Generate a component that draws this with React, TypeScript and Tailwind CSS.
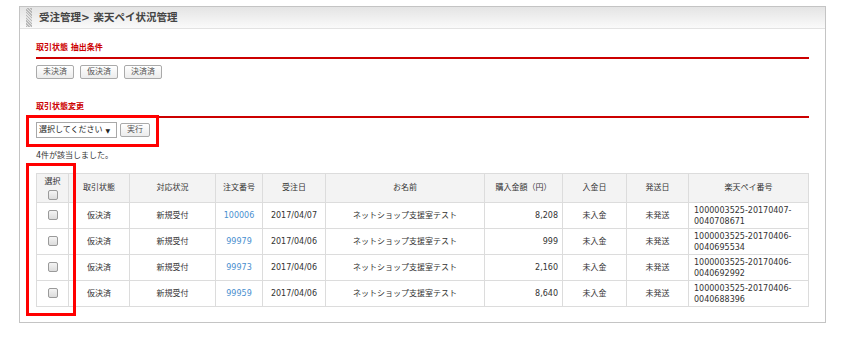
import React from 'react';

type Order = {
  status: string;
  response: string;
  orderNo: string;
  date: string;
  name: string;
  amount: string;
  paid: string;
  shipped: string;
  payNo: [string, string];
};

const ORDERS: Order[] = [
  { status: '仮決済', response: '新規受付', orderNo: '100006', date: '2017/04/07', name: 'ネットショップ支援室テスト', amount: '8,208', paid: '未入金', shipped: '未発送', payNo: ['1000003525-20170407-', '0040708671'] },
  { status: '仮決済', response: '新規受付', orderNo: '99979', date: '2017/04/06', name: 'ネットショップ支援室テスト', amount: '999', paid: '未入金', shipped: '未発送', payNo: ['1000003525-20170406-', '0040695534'] },
  { status: '仮決済', response: '新規受付', orderNo: '99973', date: '2017/04/06', name: 'ネットショップ支援室テスト', amount: '2,160', paid: '未入金', shipped: '未発送', payNo: ['1000003525-20170406-', '0040692992'] },
  { status: '仮決済', response: '新規受付', orderNo: '99959', date: '2017/04/06', name: 'ネットショップ支援室テスト', amount: '8,640', paid: '未入金', shipped: '未発送', payNo: ['1000003525-20170406-', '0040688396'] },
];

const COLUMNS: { label: string; width: number }[] = [
  { label: '選択', width: 32 },
  { label: '取引状態', width: 61 },
  { label: '対応状況', width: 86 },
  { label: '注文番号', width: 47 },
  { label: '受注日', width: 63 },
  { label: 'お名前', width: 159 },
  { label: '購入金額（円）', width: 78 },
  { label: '入金日', width: 64 },
  { label: '発送日', width: 62 },
  { label: '楽天ペイ番号', width: 120 },
];

function Checkbox() {
  return (
    <span className="inline-block w-[10px] h-[10px] rounded-[2px] border border-[#9a9a9a] bg-gradient-to-b from-[#f4f4f4] to-[#dcdcdc] align-middle" />
  );
}

function SmallButton({ label }: { label: string }) {
  return (
    <button className="h-[14px] px-[6px] rounded-[2px] border border-[#aaaaaa] bg-gradient-to-b from-white to-[#ececec] text-[8px] leading-[12px] text-[#555]">
      {label}
    </button>
  );
}

function SectionHeading({ title }: { title: string }) {
  return (
    <div>
      <p className="text-[8px] leading-[12px] font-bold text-[#cc0000]">{title}</p>
      <div className="mt-[3px] h-[2px] bg-[#cc0000]" />
    </div>
  );
}

export default function App() {
  const cell = 'border border-[#dcdcdc] px-[4px] text-[8px] leading-[12px]';

  return (
    <div
      className="relative w-[845px] h-[337px] bg-white overflow-hidden text-[#333]"
      style={{ fontFamily: '"DejaVu Sans", "Noto Sans CJK JP", sans-serif' }}
    >
      <div className="ml-[19px] mt-[6px] w-[807px] h-[317px] border border-[#c4c4c4] bg-white">
        {/* header bar */}
        <div className="h-[22px] flex items-center border-b border-[#e2e2e2] bg-gradient-to-b from-[#e4e4e4] to-[#fafafa]">
          <div className="ml-[6px] w-[6px] h-[19px] bg-[repeating-linear-gradient(45deg,#b8b8b8_0px,#b8b8b8_1px,#e2e2e2_1px,#e2e2e2_2px)]" />
          <h1 className="ml-[7px] text-[10.5px] font-bold text-[#444]">受注管理&gt; 楽天ペイ状況管理</h1>
        </div>

        <div className="px-[16px]">
          <div className="mt-[13px]">
            <SectionHeading title="取引状態 抽出条件" />
          </div>
          <div className="mt-[6px] flex gap-[6px]">
            <SmallButton label="未決済" />
            <SmallButton label="仮決済" />
            <SmallButton label="決済済" />
          </div>

          <div className="mt-[22px]">
            <SectionHeading title="取引状態変更" />
          </div>
          <div className="mt-[4px] flex items-center gap-[3px]">
            <div className="w-[81px] h-[16px] flex items-center gap-[3px] whitespace-nowrap overflow-hidden border border-[#a8a8a8] bg-white px-[2px] text-[8px] text-[#222]">
              <span>選択してください</span>
              <span className="text-[6px]">▼</span>
            </div>
            <SmallButton label="実行" />
          </div>

          <p className="mt-[12px] text-[8px] leading-[12px]">4件が該当しました。</p>

          <table className="mt-[11px] border-collapse table-fixed w-[772px]">
            <colgroup>
              {COLUMNS.map((c) => (
                <col key={c.label} style={{ width: c.width }} />
              ))}
            </colgroup>
            <thead>
              <tr className="h-[29px] bg-[#f3f3f3]">
                {COLUMNS.map((c, i) => (
                  <th key={c.label} className={`${cell} font-normal text-center`}>
                    {i === 0 ? (
                      <div className="flex flex-col items-center gap-[2px]">
                        <span>{c.label}</span>
                        <Checkbox />
                      </div>
                    ) : (
                      c.label
                    )}
                  </th>
                ))}
              </tr>
            </thead>
            <tbody>
              {ORDERS.map((o) => (
                <tr key={o.orderNo} className="h-[26px]">
                  <td className={`${cell} text-center`}>
                    <Checkbox />
                  </td>
                  <td className={`${cell} text-center`}>{o.status}</td>
                  <td className={`${cell} text-center`}>{o.response}</td>
                  <td className={`${cell} text-center`}>
                    <span className="text-[#4a8fcf]">{o.orderNo}</span>
                  </td>
                  <td className={`${cell} text-center`}>{o.date}</td>
                  <td className={`${cell} text-center`}>{o.name}</td>
                  <td className={`${cell} text-right`}>{o.amount}</td>
                  <td className={`${cell} text-center`}>{o.paid}</td>
                  <td className={`${cell} text-center`}>{o.shipped}</td>
                  <td className="border border-[#dcdcdc] pl-[5px] pr-[4px] text-[8px] leading-[11px] text-left">
                    {o.payNo[0]}
                    <br />
                    {o.payNo[1]}
                  </td>
                </tr>
              ))}
            </tbody>
          </table>
        </div>
      </div>

      {/* red annotation frames */}
      <div className="absolute left-[26px] top-[115px] w-[133px] h-[32px] border-[3px] border-[#ff0000]" />
      <div className="absolute left-[26px] top-[163px] w-[50px] h-[153px] border-[3px] border-[#ff0000]" />
    </div>
  );
}
